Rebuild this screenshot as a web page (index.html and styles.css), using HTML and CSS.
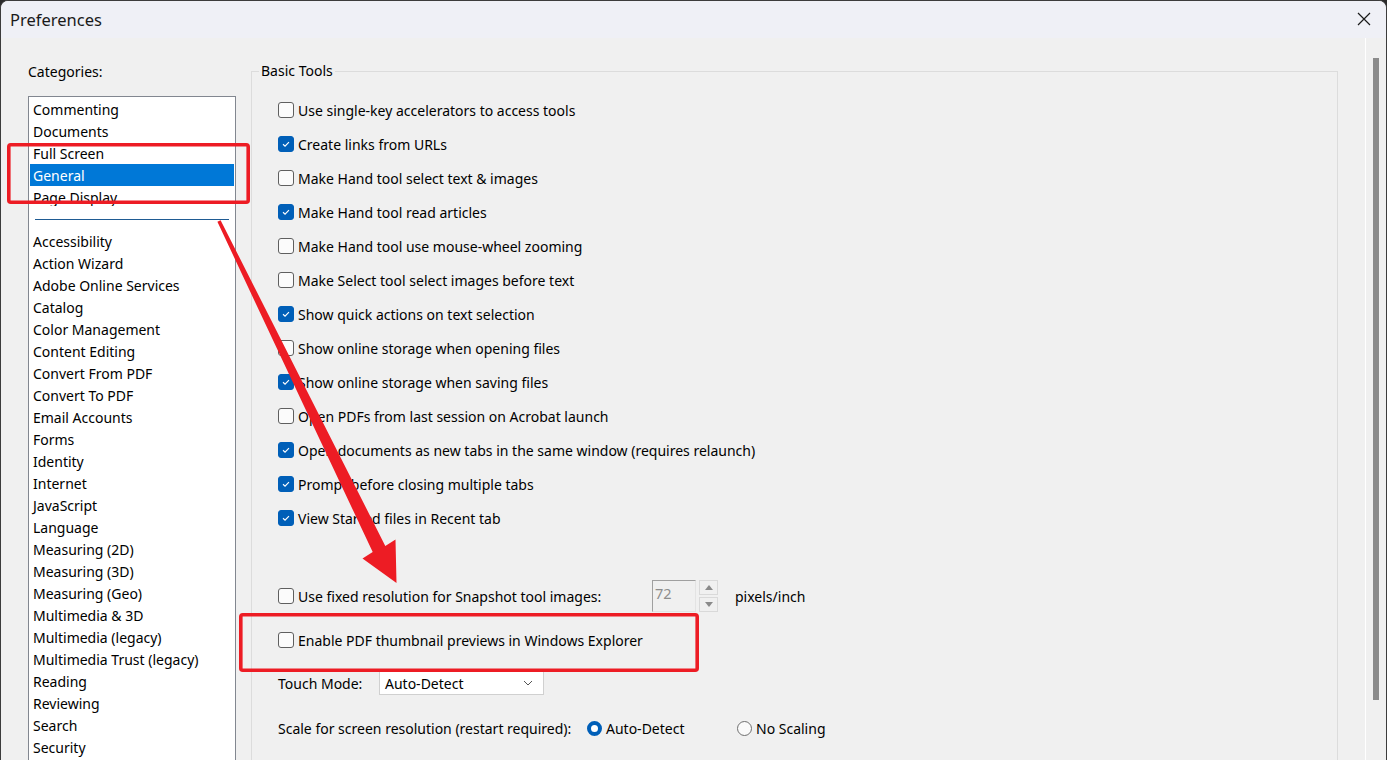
FILE: index.html
```html
<!DOCTYPE html>
<html lang="en">
<head>
    <meta charset="UTF-8">
    <title>Preferences</title>
    <link rel="stylesheet" href="styles.css">
</head>
<body>
    <div class="window">
        <div class="titlebar">
            <span class="title">Preferences</span>
            <svg class="close" width="14" height="14" viewBox="0 0 14 14">
                <path d="M1 1 L13 13 M13 1 L1 13" stroke="#1a1a1a" stroke-width="1.2" fill="none"/>
            </svg>
        </div>

        <div class="content">
            <div class="categories">
                <div class="cat-label">Categories:</div>
                <div class="listbox">
                    <div class="list-top">
                        <div class="item">Commenting</div>
                        <div class="item">Documents</div>
                        <div class="item">Full Screen</div>
                        <div class="item selected">General</div>
                        <div class="item">Page Display</div>
                    </div>
                    <div class="list-sep"></div>
                    <div class="item">Accessibility</div>
                    <div class="item">Action Wizard</div>
                    <div class="item">Adobe Online Services</div>
                    <div class="item">Catalog</div>
                    <div class="item">Color Management</div>
                    <div class="item">Content Editing</div>
                    <div class="item">Convert From PDF</div>
                    <div class="item">Convert To PDF</div>
                    <div class="item">Email Accounts</div>
                    <div class="item">Forms</div>
                    <div class="item">Identity</div>
                    <div class="item">Internet</div>
                    <div class="item">JavaScript</div>
                    <div class="item">Language</div>
                    <div class="item">Measuring (2D)</div>
                    <div class="item">Measuring (3D)</div>
                    <div class="item">Measuring (Geo)</div>
                    <div class="item">Multimedia &amp; 3D</div>
                    <div class="item">Multimedia (legacy)</div>
                    <div class="item">Multimedia Trust (legacy)</div>
                    <div class="item">Reading</div>
                    <div class="item">Reviewing</div>
                    <div class="item">Search</div>
                    <div class="item">Security</div>
                </div>
            </div>

            <fieldset class="group">
                <legend>Basic Tools</legend>

                <div class="check"><span class="box"></span>Use single-key accelerators to access tools</div>
                <div class="check"><span class="box on"><svg viewBox="0 0 16 16"><path d="M4.6 8.3 L6.9 10.5 L11.4 5.8"/></svg></span>Create links from URLs</div>
                <div class="check"><span class="box"></span>Make Hand tool select text &amp; images</div>
                <div class="check"><span class="box on"><svg viewBox="0 0 16 16"><path d="M4.6 8.3 L6.9 10.5 L11.4 5.8"/></svg></span>Make Hand tool read articles</div>
                <div class="check"><span class="box"></span>Make Hand tool use mouse-wheel zooming</div>
                <div class="check"><span class="box"></span>Make Select tool select images before text</div>
                <div class="check"><span class="box on"><svg viewBox="0 0 16 16"><path d="M4.6 8.3 L6.9 10.5 L11.4 5.8"/></svg></span>Show quick actions on text selection</div>
                <div class="check"><span class="box"></span>Show online storage when opening files</div>
                <div class="check"><span class="box on"><svg viewBox="0 0 16 16"><path d="M4.6 8.3 L6.9 10.5 L11.4 5.8"/></svg></span>Show online storage when saving files</div>
                <div class="check"><span class="box"></span>Open PDFs from last session on Acrobat launch</div>
                <div class="check"><span class="box on"><svg viewBox="0 0 16 16"><path d="M4.6 8.3 L6.9 10.5 L11.4 5.8"/></svg></span>Open documents as new tabs in the same window (requires relaunch)</div>
                <div class="check"><span class="box on"><svg viewBox="0 0 16 16"><path d="M4.6 8.3 L6.9 10.5 L11.4 5.8"/></svg></span>Prompt before closing multiple tabs</div>
                <div class="check"><span class="box on"><svg viewBox="0 0 16 16"><path d="M4.6 8.3 L6.9 10.5 L11.4 5.8"/></svg></span>View Starred files in Recent tab</div>

                <div class="check snapshot">
                    <span class="snap-label"><span class="box"></span>Use fixed resolution for Snapshot tool images:</span>
                    <span class="spin-input">72</span>
                    <span class="spin-btns">
                        <span class="spin-btn"><svg width="8" height="5" viewBox="0 0 8 5"><path d="M0 5 L4 0 L8 5 Z" fill="#8a8a8a"/></svg></span>
                        <span class="spin-btn"><svg width="8" height="5" viewBox="0 0 8 5"><path d="M0 0 L4 5 L8 0 Z" fill="#8a8a8a"/></svg></span>
                    </span>
                    <span class="unit">pixels/inch</span>
                </div>

                <div class="check thumbs"><span class="box"></span>Enable PDF thumbnail previews in Windows Explorer</div>

                <div class="touch">
                    <span class="touch-label">Touch Mode:</span>
                    <span class="dropdown">Auto-Detect
                        <svg width="10" height="6" viewBox="0 0 10 6"><path d="M1 1 L5 5 L9 1" stroke="#555" stroke-width="1" fill="none"/></svg>
                    </span>
                </div>

                <div class="scale">
                    <span class="scale-label">Scale for screen resolution (restart required):</span>
                    <span class="radio-opt"><span class="radio on"></span>Auto-Detect</span>
                    <span class="radio-opt"><span class="radio"></span>No Scaling</span>
                </div>
            </fieldset>

            <div class="scrollbar"><div class="thumb"></div></div>
        </div>

        <!-- annotation overlay -->
        <svg class="marks" width="1387" height="760" viewBox="0 0 1387 760">
            <rect x="8.8" y="144.8" width="239.4" height="57.4" rx="2" fill="none" stroke="#ed1c24" stroke-width="3.6"/>
            <rect x="240.8" y="614.8" width="456.4" height="55.4" rx="2" fill="none" stroke="#ed1c24" stroke-width="3.6"/>
            <polygon fill="#ed1c24" points="217.4,221.8 372.7,552.1 362.5,558.5 396.5,583 395.5,539.5 385.3,545.9 220.6,220.2"/>
        </svg>
    </div>
</body>
</html>
```

FILE: styles.css
```css
html, body {
    margin: 0;
    padding: 0;
    background: #2b2b2b;
    height: 760px;
    overflow: hidden;
}
.window {
    position: relative;
    height: 759px;
    background: #f0f0f0;
    border: 1px solid #3c3c3c;
    border-bottom: none;
    border-radius: 8px 8px 0 0;
    overflow: hidden;
    font-family: "Noto Sans", "Open Sans", sans-serif;
    font-size: 14px;
    color: #000;
}
.titlebar {
    height: 37px;
    background: #eff0f6;
    display: flex;
    align-items: center;
    justify-content: space-between;
    padding: 0 15px 0 9px;
}
.title {
    font-size: 16.5px;
    color: #1a1a1a;
    margin-top: -1px;
}
.close {
    margin-top: -1px;
}
.content {
    display: flex;
    align-items: flex-start;
    padding-left: 27px;
    height: 722px;
}

/* categories list */
.categories {
    width: 208px;
    flex-shrink: 0;
}
.cat-label {
    margin-top: 24px;
    line-height: 20px;
}
.listbox {
    margin-top: 14px;
    height: 700px;
    background: #fff;
    border: 1px solid #828790;
    padding: 1px;
    box-sizing: border-box;
}
.list-top {
    height: 108px;
    overflow: hidden;
}
.item {
    height: 22px;
    line-height: 23px;
    padding-left: 3px;
    white-space: nowrap;
}
.item.selected {
    background: #0078d7;
    color: #fff;
}
.list-sep {
    height: 1px;
    background: #1f5b93;
    margin: 13px 5px 10px 5px;
}

/* Basic Tools group */
.group {
    flex: 1;
    margin: 23px 0 0 15px;
    padding: 12px 0 0 26px;
    border: 1px solid #dcdcdc;
    border-bottom: none;
    height: 720px;
    min-width: 0;
}
.group legend {
    padding: 0 2px;
    margin-left: -19px;
    line-height: 20px;
}
.check {
    display: flex;
    align-items: center;
    height: 34px;
    white-space: nowrap;
}
.box {
    width: 16px;
    height: 16px;
    box-sizing: border-box;
    border: 1px solid #5f5f5f;
    border-radius: 3px;
    background: #fbfbfb;
    margin-right: 4px;
    flex-shrink: 0;
    display: inline-block;
}
.box.on {
    background: #005fb8;
    border-color: #005fb8;
}
.box svg {
    display: block;
    width: 14px;
    height: 14px;
    fill: none;
    stroke: #fff;
    stroke-width: 1.3;
}
.snapshot {
    margin-top: 44px;
}
.snap-label {
    display: flex;
    align-items: center;
    width: 374px;
}
.spin-input {
    width: 44px;
    height: 32px;
    box-sizing: border-box;
    border: 1px solid #a0a0a0;
    border-right-color: #e3e3e3;
    border-bottom-color: #e3e3e3;
    color: #8d8d8d;
    padding: 2px 0 0 2px;
    font-size: 14.5px;
    align-self: center;
}
.spin-btns {
    display: flex;
    flex-direction: column;
    gap: 2px;
    margin-left: 3px;
}
.spin-btn {
    width: 19px;
    height: 15px;
    box-sizing: border-box;
    border: 1px solid #d9d9d9;
    display: flex;
    align-items: center;
    justify-content: center;
}
.unit {
    margin-left: 17px;
}
.thumbs {
    margin-top: 10px;
}
.touch {
    display: flex;
    align-items: center;
    margin-top: 14px;
    height: 24px;
}
.touch-label {
    width: 101px;
}
.dropdown {
    width: 165px;
    height: 24px;
    box-sizing: border-box;
    background: #fff;
    border: 1px solid #d0d0d0;
    display: flex;
    align-items: center;
    justify-content: space-between;
    padding: 0 10px 0 5px;
}
.scale {
    display: flex;
    align-items: center;
    margin-top: 21px;
    height: 24px;
    white-space: nowrap;
}
.scale-label {
    width: 309px;
}
.radio-opt {
    display: flex;
    align-items: center;
    width: 150px;
}
.radio {
    width: 15px;
    height: 15px;
    box-sizing: border-box;
    border-radius: 50%;
    border: 1px solid #6f6f6f;
    background: #fafafa;
    margin-right: 4px;
}
.radio.on {
    border: 4.5px solid #005fb8;
    background: #fff;
}

/* right scrollbar */
.scrollbar {
    width: 20px;
    height: 722px;
    margin-left: 27px;
    border-left: 1px solid #ffffff;
    flex-shrink: 0;
}
.thumb {
    width: 6px;
    height: 642px;
    background: #8b8b8b;
    margin: 20px 0 0 7px;
}

/* red annotation marks */
.marks {
    position: absolute;
    top: -1px;
    left: -1px;
    pointer-events: none;
}
```
